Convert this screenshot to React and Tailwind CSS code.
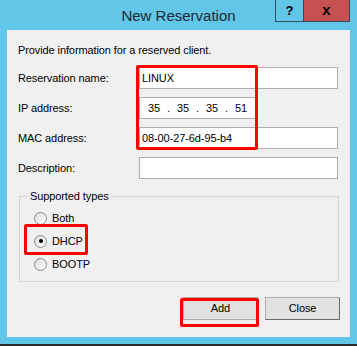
const font = { fontFamily: '"Liberation Sans", Arial, sans-serif' };

const Field = ({ value, width = 'w-[199px]' }) => (
    <div className={`${width} h-[22px] bg-white border border-[#abadb3] flex items-center px-[2px] text-black`}>
        {value}
    </div>
);

const Radio = ({ label, checked }) => (
    <div className="flex items-center h-[16px]">
        <div className="w-[13px] h-[13px] rounded-full border border-[#8a8a8a] bg-gradient-to-br from-[#dcdcdc] to-white flex items-center justify-center">
            {checked && <div className="w-[4px] h-[4px] rounded-full bg-black" />}
        </div>
        <span className="ml-[5px] text-black">{label}</span>
    </div>
);

const Octet = ({ n, dot }) => (
    <>
        <span className="w-[14px] text-center">{n}</span>
        {dot && <span className="w-[15px] text-center">.</span>}
    </>
);

const App = () => {
    return (
        <div style={font} className="w-[357px] h-[346px] bg-[#62c6e8] flex flex-col overflow-hidden border-b-2 border-[#2b2b2b]">
            {/* Title bar */}
            <div className="h-[30px] grid grid-cols-[1fr_auto_1fr] shrink-0">
                <div />
                <div className="pt-[5px] text-[15px] text-[#1b2a33]">New Reservation</div>
                <div className="flex justify-end items-start pr-[7px]">
                    <div className="w-[29px] h-[22px] border border-[#2f4f5f] border-t-0 flex items-center justify-center text-[13px] font-bold text-black">?</div>
                    <div className="w-[46px] h-[22px] bg-[#c75050] border border-[#2f4f5f] border-l-0 border-t-0 flex items-center justify-center text-[15px] font-bold text-black">x</div>
                </div>
            </div>

            {/* Client area */}
            <div className="relative mx-[7px] h-[307px] bg-[#f0f0f0] text-[11px] tracking-[-0.1px] text-black">
                <p className="pt-[13px] pl-[11px] leading-[14px]">Provide information for a reserved client.</p>

                <div className="mt-[10px] flex flex-col gap-[8px]">
                    <div className="flex items-center h-[22px]">
                        <span className="w-[132px] pl-[11px]">Reservation name:</span>
                        <Field value="LINUX" />
                    </div>
                    <div className="flex items-center h-[22px]">
                        <span className="w-[132px] pl-[11px]">IP address:</span>
                        <div className="w-[118px] h-[22px] bg-white border border-[#abadb3] flex items-center pl-[7px]">
                            <Octet n="35" dot />
                            <Octet n="35" dot />
                            <Octet n="35" dot />
                            <Octet n="51" />
                        </div>
                    </div>
                    <div className="flex items-center h-[22px]">
                        <span className="w-[132px] pl-[11px]">MAC address:</span>
                        <Field value="08-00-27-6d-95-b4" />
                    </div>
                    <div className="flex items-center h-[22px]">
                        <span className="w-[132px] pl-[11px]">Description:</span>
                        <Field value="" />
                    </div>
                </div>

                {/* Supported types group */}
                <fieldset className="ml-[12px] mt-[10px] w-[320px] h-[93px] border border-[#d5d5d5] pl-[14px] pt-[7px]">
                    <legend className="ml-[-6px] px-[2px] leading-[14px]">Supported types</legend>
                    <div className="flex flex-col gap-[7px]">
                        <Radio label="Both" />
                        <Radio label="DHCP" checked />
                        <Radio label="BOOTP" />
                    </div>
                </fieldset>

                {/* Buttons */}
                <div className="mt-[15px] flex justify-end gap-[7px] pr-[10px]">
                    <button className="w-[75px] h-[23px] bg-[#e1e1e1] border border-[#adadad]">Add</button>
                    <button className="w-[75px] h-[23px] bg-[#e1e1e1] border border-[#adadad] border-r-[#6a6a6a] border-b-[#6a6a6a]">Close</button>
                </div>

                {/* Red annotation boxes */}
                <div className="absolute left-[129px] top-[35px] w-[122px] h-[85px] border-[3px] border-[#ff0000] rounded-[2px]" />
                <div className="absolute left-[17px] top-[194px] w-[64px] h-[31px] border-[3px] border-[#ff0000] rounded-[2px]" />
                <div className="absolute left-[173px] top-[268px] w-[79px] h-[29px] border-[3px] border-[#ff0000] rounded-[2px]" />
            </div>
        </div>
    );
};

export default App;
